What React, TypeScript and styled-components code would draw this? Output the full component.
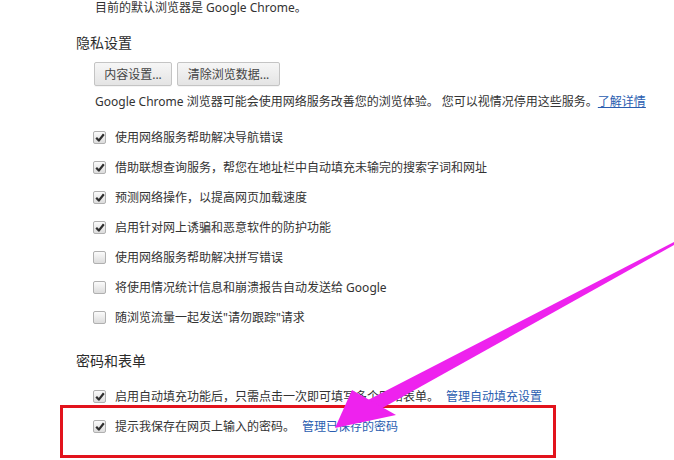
import React from 'react';
import styled, { createGlobalStyle } from 'styled-components';

const GlobalStyle = createGlobalStyle`
	html, body {
		margin: 0;
		padding: 0;
		background: #fff;
	}
	body {
		font-family: 'Segoe UI', 'Noto Sans', 'Noto Sans CJK SC', sans-serif;
		color: #333;
	}
`;

const Page = styled.div`
	position: relative;
	width: 674px;
	height: 460px;
	overflow: hidden;
`;

const Note = styled.p<{ $top?: number }>`
	margin: ${(p) => p.$top ?? 0}px 0 0 95px;
	font-size: 12px;
	line-height: 16px;
	height: 16px;
	white-space: nowrap;
	color: #333;
`;

const Heading = styled.h3<{ $top: number }>`
	margin: ${(p) => p.$top}px 0 0 76px;
	font-size: 14px;
	font-weight: normal;
	line-height: 20px;
	height: 20px;
	color: #2c2c2c;
`;

const ButtonRow = styled.div`
	display: flex;
	gap: 5px;
	margin: 9px 0 0 94px;
`;

const Button = styled.button<{ $width: number }>`
	width: ${(p) => p.$width}px;
	height: 24px;
	padding: 0;
	border: 1px solid #c4c4c4;
	border-radius: 2px;
	background: linear-gradient(#f6f6f6, #e4e4e4);
	font-family: inherit;
	font-size: 12px;
	color: #444;
	box-shadow: 0 1px 0 rgba(0, 0, 0, 0.04);
`;

const Link = styled.a<{ $underline?: boolean }>`
	margin-left: ${(p) => (p.$underline ? 0 : 7)}px;
	color: #2a5db0;
	text-decoration: ${(p) => (p.$underline ? 'underline' : 'none')};
	cursor: pointer;
`;

const List = styled.div<{ $top: number }>`
	display: flex;
	flex-direction: column;
	margin: ${(p) => p.$top}px 0 0 93px;
`;

const Row = styled.label<{ $height?: number }>`
	display: flex;
	align-items: center;
	gap: 9px;
	height: ${(p) => p.$height ?? 30}px;
	font-size: 12px;
	white-space: nowrap;
	color: #333;
`;

const Box = styled.span`
	display: inline-flex;
	align-items: center;
	justify-content: center;
	flex: none;
	width: 11px;
	height: 11px;
	border: 1px solid #b0b0b0;
	border-radius: 2px;
	background: linear-gradient(#fbfbfb, #dcdcdc);
`;

const Highlight = styled.div`
	box-sizing: border-box;
	width: 496px;
	height: 53px;
	margin: 0 0 0 60px;
	padding: 9px 0 0 30px;
	border: 3px solid #e2131c;
`;

const Arrow = styled.svg`
	position: absolute;
	left: 0;
	top: 0;
	pointer-events: none;
`;

const Check = ({ on }: { on?: boolean }) => (
	<Box>
		{on && (
			<svg width="10" height="9" viewBox="0 0 10 9">
				<path d="M1.2 4.8 L3.8 7.6 L8.8 1.2" fill="none" stroke="#2e2e2e" strokeWidth="2.2" strokeLinejoin="round" />
			</svg>
		)}
	</Box>
);

const privacy: [boolean, string][] = [
	[true, '使用网络服务帮助解决导航错误'],
	[true, '借助联想查询服务，帮您在地址栏中自动填充未输完的搜索字词和网址'],
	[true, '预测网络操作，以提高网页加载速度'],
	[true, '启用针对网上诱骗和恶意软件的防护功能'],
	[false, '使用网络服务帮助解决拼写错误'],
	[false, '将使用情况统计信息和崩溃报告自动发送给 Google'],
	[false, '随浏览流量一起发送"请勿跟踪"请求'],
];

export default function App() {
	return (
		<Page>
			<GlobalStyle />
			<Note>目前的默认浏览器是 Google Chrome。</Note>

			<Heading $top={17}>隐私设置</Heading>
			<ButtonRow>
				<Button $width={78}>内容设置...</Button>
				<Button $width={103}>清除浏览数据...</Button>
			</ButtonRow>
			<Note $top={8}>
				Google Chrome 浏览器可能会使用网络服务改善您的浏览体验。 您可以视情况停用这些服务。
				<Link $underline>了解详情</Link>
			</Note>
			<List $top={12}>
				{privacy.map(([on, text]) => (
					<Row key={text}>
						<Check on={on} />
						<span>{text}</span>
					</Row>
				))}
			</List>

			<Heading $top={19}>密码和表单</Heading>
			<List $top={16}>
				<Row $height={18}>
					<Check on />
					<span>
						启用自动填充功能后，只需点击一次即可填写多个网络表单。
						<Link>管理自动填充设置</Link>
					</span>
				</Row>
			</List>
			<Highlight>
				<Row $height={18}>
					<Check on />
					<span>
						提示我保存在网页上输入的密码。
						<Link>管理已保存的密码</Link>
					</span>
				</Row>
			</Highlight>

			<Arrow width="674" height="460" viewBox="0 0 674 460">
				<polygon points="674,242 674,245 377,411 368,400" fill="#ee22ee" />
				<polygon points="335,428 352,390 396,415" fill="#ee22ee" />
			</Arrow>
		</Page>
	);
}
